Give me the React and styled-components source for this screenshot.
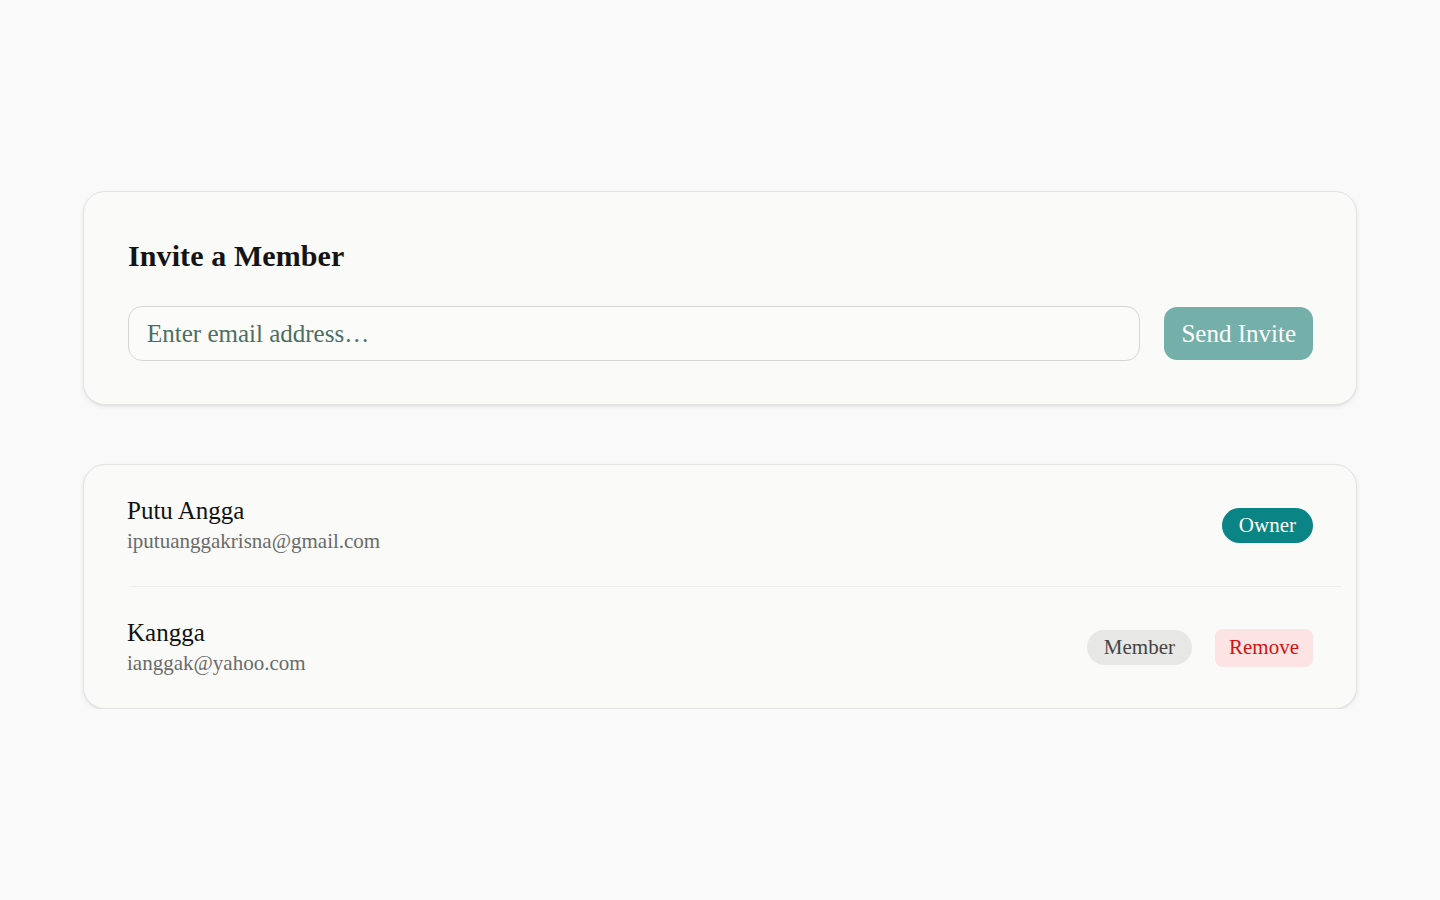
import React from 'react'
import styled, { createGlobalStyle } from 'styled-components'

const GlobalStyle = createGlobalStyle`
  html, body { margin: 0; padding: 0; background: #f9f9f9; }
  body { font-family: "Liberation Serif", "Times New Roman", serif; color: #111; }
`

const Page = styled.main`
  width: 1274px;
  margin: 0 auto;
  padding-top: 191px;
  display: flex;
  flex-direction: column;
  gap: 59px;
`

const Card = styled.section`
  background: #fafaf9;
  border: 1px solid #e3e3e3;
  border-radius: 22px;
  box-shadow: 0 2px 4px rgba(0,0,0,0.07), 0 1px 1px rgba(0,0,0,0.04);
  padding: ${p => p.$flush ? '0' : '47px 43px 43px 43px'};
`

const Heading = styled.h2`
  margin: 0 0 33px 1px;
  font-size: 30px;
  font-weight: 700;
  line-height: 34px;
  letter-spacing: 0.1px;
  color: #141414;
`

const InviteRow = styled.form`
  display: flex;
  align-items: center;
  gap: 24px;
`

const EmailInput = styled.input`
  flex: 1;
  height: 55px;
  box-sizing: border-box;
  border: 1px solid #d6d6d6;
  border-radius: 14px;
  background: #fbfbfa;
  padding: 0 18px;
  margin-left: 1px;
  font-family: inherit;
  font-size: 25px;
  color: #2f5546;
  outline: none;
  &::placeholder { color: #4c6e60; }
`

const SendButton = styled.button`
  height: 53px;
  padding: 0 17px;
  border: none;
  border-radius: 13px;
  background: #74b0a9;
  color: #fdfdfd;
  font-family: inherit;
  font-size: 25px;
  cursor: pointer;
`

const MemberRow = styled.div`
  display: flex;
  align-items: center;
  justify-content: space-between;
  padding: 30px 43px 30px 43px;
`

const Divider = styled.hr`
  margin: 0 14px 0 45px;
  border: none;
  border-top: 1px solid #efefed;
`

const Info = styled.div`
  display: flex;
  flex-direction: column;
`

const Name = styled.span`
  font-size: 25px;
  line-height: 31px;
  color: #121212;
`

const Email = styled.span`
  font-size: 21px;
  line-height: 30px;
  color: #6a6a6a;
`

const Actions = styled.div`
  display: flex;
  align-items: center;
  gap: 23px;
`

const Badge = styled.span`
  display: inline-flex;
  align-items: center;
  height: 35px;
  padding: 0 17px;
  border-radius: 18px;
  font-size: 21px;
  background: ${p => p.$owner ? '#0a8484' : '#e7e7e6'};
  color: ${p => p.$owner ? '#ffffff' : '#444'};
`

const RemoveButton = styled.button`
  height: 38px;
  padding: 0 14px;
  border: none;
  border-radius: 8px;
  background: #fbe4e3;
  color: #d3120f;
  font-family: inherit;
  font-size: 21px;
  cursor: pointer;
`

const members = [
  { name: 'Putu Angga', email: 'iputuanggakrisna@gmail.com', role: 'Owner' },
  { name: 'Kangga', email: 'ianggak@yahoo.com', role: 'Member' },
]

export default function App() {
  return (
    <>
      <GlobalStyle />
      <Page>
        <Card>
          <Heading>Invite a Member</Heading>
          <InviteRow onSubmit={e => e.preventDefault()}>
            <EmailInput type="email" placeholder="Enter email address…" />
            <SendButton type="submit">Send Invite</SendButton>
          </InviteRow>
        </Card>
        <Card $flush>
          {members.map((m, i) => (
            <React.Fragment key={m.email}>
              {i > 0 && <Divider />}
              <MemberRow>
                <Info>
                  <Name>{m.name}</Name>
                  <Email>{m.email}</Email>
                </Info>
                <Actions>
                  <Badge $owner={m.role === 'Owner'}>{m.role}</Badge>
                  {m.role !== 'Owner' && <RemoveButton>Remove</RemoveButton>}
                </Actions>
              </MemberRow>
            </React.Fragment>
          ))}
        </Card>
      </Page>
    </>
  )
}
